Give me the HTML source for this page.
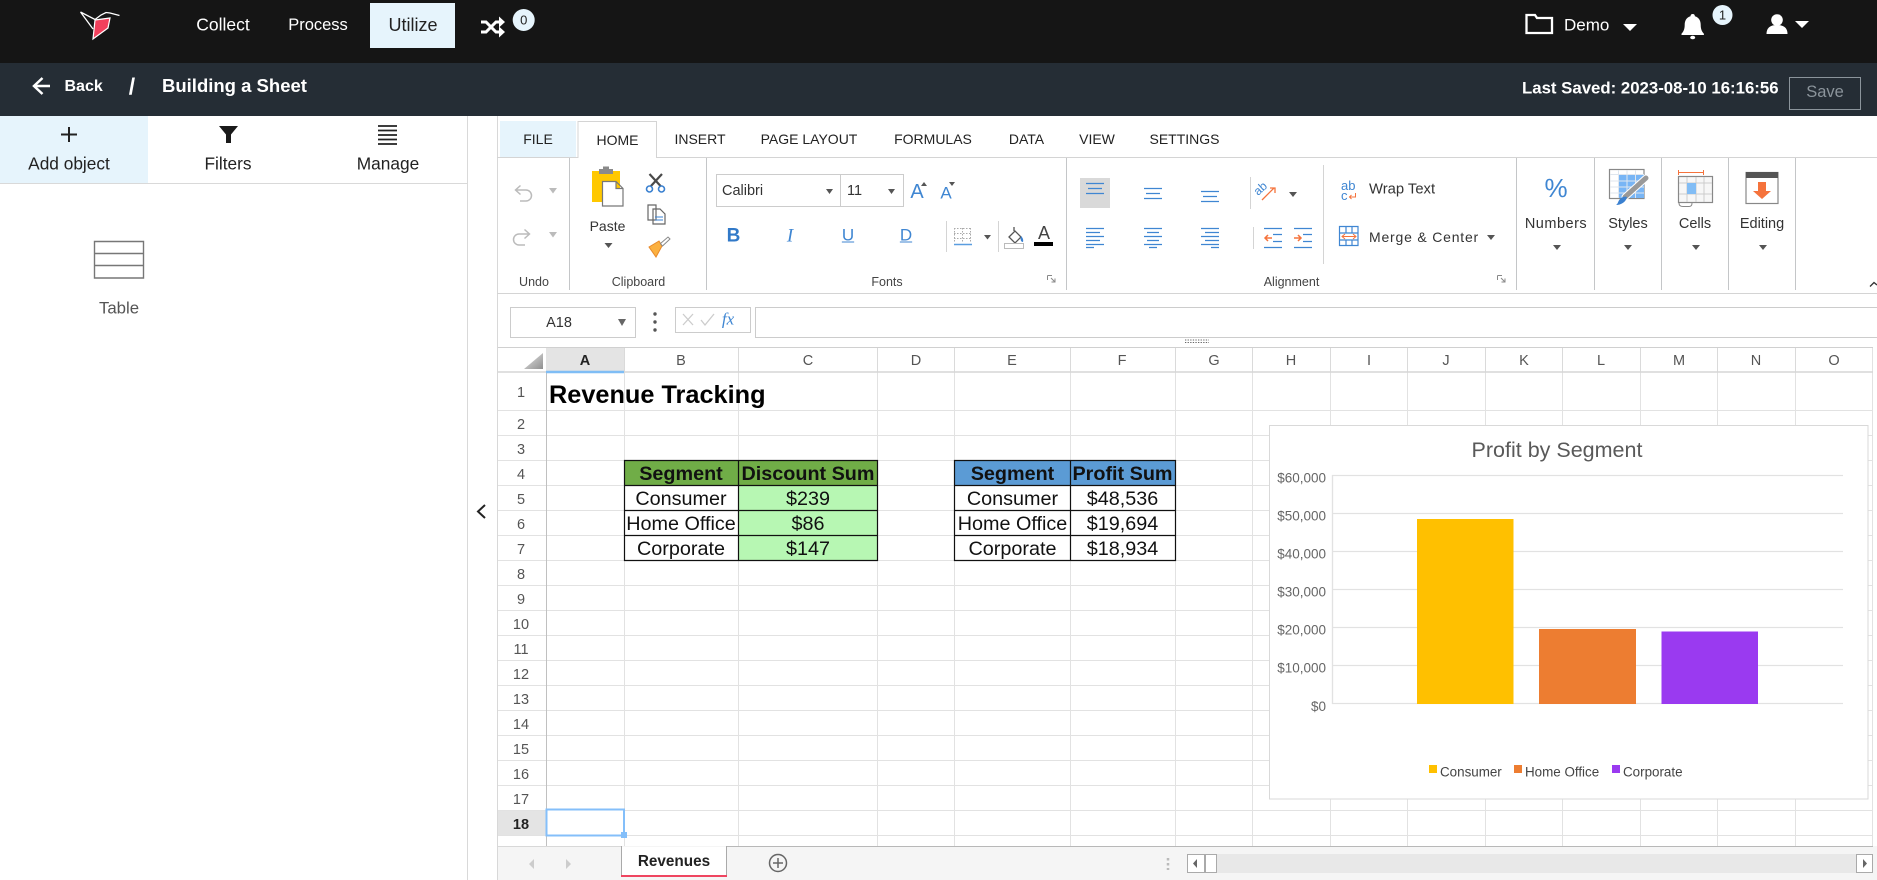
<!DOCTYPE html>
<html><head><meta charset="utf-8"><title>Building a Sheet</title>
<style>
html,body{margin:0;padding:0;background:#fff;width:1877px;height:880px;overflow:hidden}
body{position:relative;font-family:"Liberation Sans",sans-serif;color:#333}
.b{position:absolute}
.c,.l{position:absolute;white-space:nowrap;line-height:1}
.c{transform:translate(-50%,-50%)}
.l{transform:translateY(-50%)}
.w{color:#fff}
.tab{font-size:14px;color:#222}
.g{font-size:12.5px;color:#444}
svg{position:absolute;left:0;top:0}
svg text{font-family:"Liberation Sans",sans-serif}
</style></head><body>
<div class="b" style="left:0;top:0;width:1877px;height:63px;background:#151515"></div>
<div class="b" style="left:0;top:63px;width:1877px;height:53px;background:#252d35"></div>
<div class="b" style="left:370px;top:3px;width:85px;height:45px;background:#e6f4fc"></div>
<div class="b" style="left:0;top:116px;width:148px;height:67px;background:#e6f4fc"></div>
<div class="b" style="left:0;top:183px;width:467px;height:1px;background:#d9d9d9"></div>
<div class="b" style="left:467px;top:116px;width:1px;height:764px;background:#d9d9d9"></div>
<div class="b" style="left:497px;top:116px;width:1px;height:764px;background:#d8d8d8"></div>
<div class="b" style="left:500px;top:121px;width:76px;height:36px;background:#e6f4fc"></div>
<div class="b" style="left:1789px;top:77px;width:70px;height:31px;border:1px solid #8b949b"></div>
<div class="b" style="left:716px;top:174px;width:186px;height:31px;border:1px solid #ccc"></div>
<div class="b" style="left:840px;top:174px;width:1px;height:32px;background:#ccc"></div>
<div class="b" style="left:510px;top:307px;width:124px;height:29px;border:1px solid #ccc"></div>
<div class="b" style="left:675px;top:307px;width:74px;height:24px;border:1px solid #ccc"></div>
<div class="b" style="left:755px;top:307px;width:1122px;height:29px;border:1px solid #ccc;border-right:0"></div>

<svg width="1877" height="880" viewBox="0 0 1877 880">
<!-- ribbon frame -->
<path d="M497 157.5H578V121.5H656.5V157.5H1877M497 293.5H1877" fill="none" stroke="#d4d4d4" stroke-width="1"/>
<path d="M569.5 158V290M706.5 158V290M1066.5 158V290M1516.5 158V290M1594.5 158V290M1661.5 158V290M1728.5 158V290M1795.5 158V290" stroke="#c4c6c8" stroke-width="1"/>
<path d="M946.5 221V252M998.5 221V252M1250.5 177V209M1253.5 227V249M1323.5 165V264" stroke="#d4d4d4"/>
<!-- sheet grid -->
<rect x="498" y="347" width="1379" height="499" fill="#fff"/>
<rect x="546" y="347" width="78" height="25" fill="#e4e4e4"/>
<rect x="498" y="810" width="48" height="25" fill="#e4e4e4"/>
<path d="M624.5 372V846M738.5 372V846M877.5 372V846M954.5 372V846M1070.5 372V846M1175.5 372V846M1252.5 372V846M1330.5 372V846M1407.5 372V846M1485.5 372V846M1562.5 372V846M1640.5 372V846M1717.5 372V846M1795.5 372V846M1872.5 347V846" stroke="#e2e2e2" fill="none"/>
<path d="M624.5 347V372M738.5 347V372M877.5 347V372M954.5 347V372M1070.5 347V372M1175.5 347V372M1252.5 347V372M1330.5 347V372M1407.5 347V372M1485.5 347V372M1562.5 347V372M1640.5 347V372M1717.5 347V372M1795.5 347V372" stroke="#dadada" fill="none"/>
<path d="M498 410.5H1873M498 435.5H1873M498 460.5H1873M498 485.5H1873M498 510.5H1873M498 535.5H1873M498 560.5H1873M498 585.5H1873M498 610.5H1873M498 635.5H1873M498 660.5H1873M498 685.5H1873M498 710.5H1873M498 735.5H1873M498 760.5H1873M498 785.5H1873M498 810.5H1873M498 835.5H1873" stroke="#e2e2e2" fill="none"/>
<path d="M498 347.5H1873" stroke="#d0d0d0"/>
<path d="M498 372H1873" stroke="#d6d6d6" stroke-width="1.5"/>
<path d="M546.5 372V846" stroke="#c0c0c0"/>
<path d="M546 372H624" stroke="#7fbdf5" stroke-width="2.5"/>
<defs><linearGradient id="tri" x1="0" y1="0" x2="1" y2="1"><stop offset="0" stop-color="#e8e8e8"/><stop offset="1" stop-color="#8f8f8f"/></linearGradient></defs>
<path d="M524 369L543 353V369Z" fill="url(#tri)"/>
<g font-size="14.5" fill="#555" text-anchor="middle">
<text x="585" y="365" font-weight="bold" fill="#222">A</text><text x="681" y="365">B</text><text x="808" y="365">C</text><text x="916" y="365">D</text><text x="1012" y="365">E</text><text x="1122" y="365">F</text><text x="1214" y="365">G</text><text x="1291" y="365">H</text><text x="1369" y="365">I</text><text x="1446" y="365">J</text><text x="1524" y="365">K</text><text x="1601" y="365">L</text><text x="1679" y="365">M</text><text x="1756" y="365">N</text><text x="1834" y="365">O</text>
<text x="521" y="397">1</text><text x="521" y="429">2</text><text x="521" y="454">3</text><text x="521" y="479">4</text><text x="521" y="504">5</text><text x="521" y="529">6</text><text x="521" y="554">7</text><text x="521" y="579">8</text><text x="521" y="604">9</text><text x="521" y="629">10</text><text x="521" y="654">11</text><text x="521" y="679">12</text><text x="521" y="704">13</text><text x="521" y="729">14</text><text x="521" y="754">15</text><text x="521" y="779">16</text><text x="521" y="804">17</text><text x="521" y="829" font-weight="bold" fill="#222">18</text>
</g>
<!-- data -->
<text x="549" y="403" font-size="25.3" font-weight="bold" fill="#000">Revenue Tracking</text>
<rect x="624" y="460" width="114" height="25" fill="#70ad47"/><rect x="738" y="460" width="139.5" height="25" fill="#70ad47"/>
<rect x="738" y="485" width="139.5" height="75" fill="#b7f7b3"/>
<rect x="955" y="460" width="220" height="25" fill="#5b9bd5"/>
<path d="M624.5 460.5H877.5V560.5H624.5ZM738.5 460.5V560.5M624.5 485.5H877.5M624.5 510.5H877.5M624.5 535.5H877.5M954.5 460.5H1175.5V560.5H954.5ZM1070.5 460.5V560.5M954.5 485.5H1175.5M954.5 510.5H1175.5M954.5 535.5H1175.5" fill="none" stroke="#111" stroke-width="1.2"/>
<g font-size="19.8" fill="#111" text-anchor="middle">
<text x="681" y="480" font-weight="bold">Segment</text><text x="808" y="480" font-weight="bold">Discount Sum</text>
<text x="681" y="505">Consumer</text><text x="808" y="505">$239</text>
<text x="681" y="530">Home Office</text><text x="808" y="530">$86</text>
<text x="681" y="555">Corporate</text><text x="808" y="555">$147</text>
<text x="1012.5" y="480" font-weight="bold">Segment</text><text x="1122.5" y="480" font-weight="bold">Profit Sum</text>
<text x="1012.5" y="505">Consumer</text><text x="1122.5" y="505">$48,536</text>
<text x="1012.5" y="530">Home Office</text><text x="1122.5" y="530">$19,694</text>
<text x="1012.5" y="555">Corporate</text><text x="1122.5" y="555">$18,934</text>
</g>
<!-- selection -->
<rect x="546.5" y="809.5" width="77.5" height="26" fill="#fff" stroke="#84bffa" stroke-width="2"/>
<rect x="621" y="832" width="6" height="6" fill="#84bffa"/>
<!-- chart -->
<rect x="1269.5" y="425.5" width="598.5" height="373.5" fill="#fff" stroke="#d9d9d9"/>
<text x="1557" y="457" font-size="21.5" text-anchor="middle" fill="#595959">Profit by Segment</text>
<path d="M1332 475.500H1843M1332 513.500H1843M1332 551.500H1843M1332 589.500H1843M1332 627.500H1843M1332 665.500H1843M1332 703.500H1843M1332.500 475V704" stroke="#e2e2e2" fill="none" stroke-width="1.300"/>
<g font-size="13.500" fill="#666" text-anchor="end">
<text x="1326" y="482.500">$60,000</text><text x="1326" y="520.500">$50,000</text><text x="1326" y="558.500">$40,000</text><text x="1326" y="596.500">$30,000</text><text x="1326" y="634.500">$20,000</text><text x="1326" y="672.500">$10,000</text><text x="1326" y="711">$0</text>
</g>
<rect x="1417" y="519" width="96.500" height="185" fill="#ffc000"/>
<rect x="1539" y="629" width="97" height="75" fill="#ed7d31"/>
<rect x="1661.500" y="631.500" width="96.500" height="72.500" fill="#9a3af0"/>
<rect x="1429" y="765" width="8" height="8" fill="#ffc000"/><rect x="1514" y="765" width="8" height="8" fill="#ed7d31"/><rect x="1612" y="765" width="8" height="8" fill="#9a3af0"/>
<g font-size="13.400" fill="#444"><text x="1440" y="776.500">Consumer</text><text x="1525" y="776.500">Home Office</text><text x="1623" y="776.500">Corporate</text></g>
<!-- sheet tabs -->
<rect x="498" y="846" width="1379" height="34" fill="#f5f5f5"/>
<path d="M498 846.500H621" stroke="#d8d8d8"/><path d="M727 846.500H1873" stroke="#b8b8b8"/>
<path d="M621.500 846V876M726.500 846V876" stroke="#aaa"/>
<rect x="622" y="847" width="104" height="28" fill="#fff"/>
<rect x="621" y="875" width="106" height="2" fill="#ef4560"/>
<text x="674" y="866" font-size="15.300" font-weight="bold" text-anchor="middle" fill="#222">Revenues</text>
<path d="M534 859V869L529 864ZM566 859V869L571 864Z" fill="#ccc"/>
<circle cx="778" cy="863" r="8.500" fill="none" stroke="#666" stroke-width="1.500"/><path d="M773 863H783M778 858V868" stroke="#666" stroke-width="1.500"/>
<path d="M1168 858V870" stroke="#bbb" stroke-width="2.500" stroke-dasharray="2.500 2.500"/>
<rect x="1187" y="854" width="685" height="19" fill="#e8e8e8"/>
<rect x="1187.500" y="854.500" width="17" height="18" fill="#fff" stroke="#aaa"/><rect x="1205.500" y="854.500" width="11" height="18" fill="#fff" stroke="#aaa"/><rect x="1856.500" y="854.500" width="16" height="18" fill="#fff" stroke="#aaa"/>
<path d="M1197 859V868L1193 863.500ZM1863 859V868L1867 863.500Z" fill="#666"/>
<!-- top bar icons -->
<path d="M80.500 12L95 19.500L101 15L106 12.500L110 13L119.500 15.500M80.500 12L93 29" fill="none" stroke="#fff" stroke-width="1.300"/>
<path d="M95 20L110 18L108 28L93 39Z" fill="#f2405c" stroke="#fff" stroke-width="1.200"/>
<path d="M481 22H486L496 32H500M481 32H486L496 22H500" fill="none" stroke="#fff" stroke-width="3"/>
<path d="M499 16.500L505 22L499 27.500ZM499 26.500L505 32L499 37.500Z" fill="#fff"/>
<path d="M1526.500 15H1535L1537 18H1552V33H1526.500Z" fill="none" stroke="#fff" stroke-width="2.300"/>
<path d="M1623 24H1637L1630 31Z" fill="#fff"/>
<path d="M1692.700 14c-1.500 0-2.200 1-2.200 2.200c-4 1-5.800 4.500-5.800 8.500c0 5-1.500 7-3.200 9v1.300h22.400v-1.300c-1.700-2-3.200-4-3.200-9c0-4-1.800-7.500-5.800-8.500c0-1.200-.7-2.200-2.200-2.200z" fill="#fff"/>
<ellipse cx="1692.700" cy="37.500" rx="2.500" ry="1.800" fill="#fff"/>
<circle cx="1777" cy="20" r="5.800" fill="#fff"/><path d="M1766.500 34c0-7 5-9 10.500-9s10.500 2 10.500 9z" fill="#fff"/>
<path d="M1795 21H1809L1802 28Z" fill="#fff"/>
<circle cx="523.700" cy="20" r="11" fill="#e6f4fc"/>
<circle cx="1722.500" cy="15" r="10" fill="#e6f4fc"/>
<path d="M50 86H35M42.500 78L34 86L42.500 94" fill="none" stroke="#fff" stroke-width="2.500"/>
<!-- left panel icons -->
<path d="M61 134.500H77M69 127V142" stroke="#222" stroke-width="2"/>
<path d="M219 126H238L231 134.500V143H226V134.500Z" fill="#1a1a1a"/>
<path d="M378 126H397M378 130.500H397M378 135H397M378 139.500H397M378 144H397" stroke="#222" stroke-width="1.800"/>
<path d="M94.500 241.500H143.500V278H94.500ZM94.500 253.500H143.500M94.500 265.500H143.500" fill="none" stroke="#777" stroke-width="1.400"/>
<path d="M485 505L478 511.500L485 518" fill="none" stroke="#222" stroke-width="2"/>
<!-- undo / redo -->
<path d="M516 190H526a5.500 5.500 0 0 1 0 11H520M520.500 185.500L515.500 190L520.500 194.500" fill="none" stroke="#bbb" stroke-width="1.500"/>
<path d="M529 234H519a5.500 5.500 0 0 0 0 11H525M524.500 229.500L529.500 234L524.500 238.500" fill="none" stroke="#bbb" stroke-width="1.500"/>
<path d="M549 188H557L553 193.500ZM549 232H557L553 237.500Z" fill="#bbb"/>
<!-- clipboard -->
<rect x="592" y="171" width="28" height="31" fill="#ffc800"/>
<rect x="599" y="169" width="14" height="5" fill="#8a8a8a"/><rect x="603" y="166.500" width="6" height="4" fill="#8a8a8a"/>
<path d="M602.500 181.500H616L623 188.500V206H602.500ZM616 181.500V188.500H623" fill="#fff" stroke="#777" stroke-width="1.200"/>
<path d="M604.500 243H612.500L608.500 248Z" fill="#555"/>
<path d="M650.500 186.500L662 174M661 186.500L649.500 174" stroke="#4a4a4a" stroke-width="2.200" fill="none"/>
<circle cx="649.500" cy="189" r="3" fill="none" stroke="#3a80d0" stroke-width="1.600"/><circle cx="661.500" cy="189" r="3" fill="none" stroke="#3a80d0" stroke-width="1.600"/>
<path d="M648 205H656V220H648ZM653 209H660L665 214V224H653Z" fill="#fff" stroke="#666" stroke-width="1.200"/>
<path d="M655 217H663M655 220H663" stroke="#3a80d0"/>
<path d="M649 247L659 241L662 246L656 257Z" fill="#fbb040" stroke="#e8892a"/>
<path d="M660.500 243.500L668 237L670 239L662.500 246Z" fill="#fff" stroke="#888"/>
<!-- fonts -->
<path d="M826 189H833L829.500 194ZM888 189H895L891.500 194Z" fill="#555"/>
<path d="M921 186L924 182L927 186Z" fill="#555"/><path d="M949 182H955L952 186Z" fill="#555"/>
<path d="M954 228.500H971M954 233.500H971M954 238.500H971M954.500 228V243M962.500 228V243M970.500 228V243" stroke="#aaa" stroke-dasharray="1.500 1.500" fill="none"/>
<path d="M954 244.500H972" stroke="#5a9ee0" stroke-width="1.500"/>
<path d="M984 235H991L987.500 239.500Z" fill="#555"/>
<path d="M1009 237L1015 231L1021 237L1015 243Z" fill="#fff" stroke="#555" stroke-width="1.300"/><path d="M1014 227V231" stroke="#555" stroke-width="1.300"/>
<path d="M1021 236c2 2 2.500 4 2 6c-2 0-3-2-2-6" fill="#3a80d0"/>
<rect x="1004.500" y="243.500" width="19" height="5" fill="#fff" stroke="#bbb"/>
<rect x="1034" y="242" width="19" height="4" fill="#000"/>
<!-- launcher -->
<path d="M1047.500 275.500H1052M1047.500 275.500V280M1051 278L1055 282M1055 278.500V282H1051.500" fill="none" stroke="#888"/>
<path d="M1497.500 275.500H1502M1497.500 275.500V280M1501 278L1505 282M1505 278.500V282H1501.500" fill="none" stroke="#888"/>
<!-- alignment -->
<rect x="1080" y="178" width="30" height="30" fill="#d9d9d9"/>
<g stroke="#3f86d2" stroke-width="1.300" fill="none">
<path d="M1086 183.500H1104M1088 188.500H1102M1086 193.500H1104"/>
<path d="M1144 188.500H1162M1146 193.500H1160M1144 198.500H1162"/>
<path d="M1201 191.500H1219M1203 196.500H1217M1201 201.500H1219"/>
<path d="M1086 228.500H1104M1086 232.500H1100M1086 236.500H1104M1086 240.500H1100M1086 244.500H1104M1086 247.500H1094"/>
<path d="M1144 228.500H1162M1147 232.500H1159M1144 236.500H1162M1147 240.500H1159M1144 244.500H1162M1149 247.500H1157"/>
<path d="M1201 228.500H1219M1205 232.500H1219M1201 236.500H1219M1205 240.500H1219M1201 244.500H1219M1211 247.500H1219"/>
<path d="M1264 228.500H1282M1273 234.500H1282M1273 241.500H1282M1264 247.500H1282"/>
<path d="M1294 228.500H1312M1303 234.500H1312M1303 241.500H1312M1294 247.500H1312"/>
</g>
<path d="M1272 238H1265M1268 235L1265 238L1268 241M1294 238H1301M1298 235L1301 238L1298 241" stroke="#f5733c" stroke-width="1.500" fill="none"/>
<path d="M1262 200L1274 188M1270 188H1275V193" stroke="#f5733c" stroke-width="1.300" fill="none"/>
<text x="1258" y="196" font-size="12" fill="#3f86d2" transform="rotate(-42 1258 196)">ab</text>
<path d="M1289 192H1297L1293 197Z" fill="#555"/>
<text x="1341" y="190" font-size="13" fill="#3f86d2">ab</text><text x="1341" y="200" font-size="13" fill="#3f86d2">c</text>
<path d="M1355.500 193V197H1349.500M1351.500 195L1349.500 197L1351.500 199" stroke="#f5733c" fill="none"/>
<path d="M1339.500 226.500H1358V245.500H1339.500ZM1339.500 233H1358M1339.500 240H1358M1346 226.500V233M1352 226.500V233M1346 240V245.500M1352 240V245.500" fill="#fff" stroke="#3f86d2" stroke-width="1.200"/>
<path d="M1342 236.500H1356M1345 234L1342 236.500L1345 239M1353 234L1356 236.500L1353 239" stroke="#f5733c" fill="none"/>
<path d="M1487 235H1495L1491 240Z" fill="#555"/>
<!-- right groups -->
<path d="M1553 245H1561L1557 250ZM1624 245H1632L1628 250ZM1692 245H1700L1696 250ZM1759 245H1767L1763 250Z" fill="#555"/>
<rect x="1609.500" y="169.500" width="34.500" height="29" fill="#fff" stroke="#888" stroke-width="1.200"/>
<rect x="1618" y="174" width="26" height="24" fill="#78b5f5"/>
<path d="M1610 174.500H1644M1610 181H1644M1610 187H1644M1610 193H1644M1618.500 170V198M1627 170V198M1635.500 170V198" stroke="#dfe6ee" fill="none"/>
<path d="M1646 178L1625 197" stroke="#fff" stroke-width="7" stroke-linecap="round"/>
<path d="M1646 178L1625 197" stroke="#999" stroke-width="5" stroke-linecap="round"/>
<path d="M1627 197c-1 5-6 8-11 8c2-1 2-4 4-6c2-2 5-3 7-2z" fill="#3a80d0"/>
<path d="M1678 172.500H1704M1678.500 170V175M1703.500 170V175" stroke="#f5733c" fill="none"/>
<rect x="1678.500" y="176.500" width="34" height="26" fill="#f7f7f7" stroke="#888" stroke-width="1.200"/>
<path d="M1687 177V202M1696 177V202M1704 177V202M1679 183H1712M1679 194H1712" stroke="#ccc" fill="none"/>
<rect x="1687" y="183" width="9" height="11" fill="#82bdf5"/>
<path d="M1679 203c0 3 2 3.500 4 3.500h6c2 0 3-1 3-3.500" stroke="#888" fill="none"/>
<rect x="1746" y="172.500" width="32" height="31" fill="#fff" stroke="#888" stroke-width="1.200"/>
<rect x="1746" y="172" width="32" height="6" fill="#555"/>
<path d="M1758 182H1766V191H1771L1762 199L1753 191H1758Z" fill="#f5733c"/>
<path d="M1870 286.500L1874 282.500L1877 285" fill="none" stroke="#333" stroke-width="1.300"/>
<!-- formula bar -->
<path d="M618 319H626L622 326Z" fill="#666"/>
<circle cx="655" cy="314" r="1.700" fill="#555"/><circle cx="655" cy="322" r="1.700" fill="#555"/><circle cx="655" cy="330" r="1.700" fill="#555"/>
<path d="M683 314L693 325M693 314L683 325" stroke="#ccc" stroke-width="1.300"/>
<path d="M701 320L705 325L714 314" stroke="#ccc" stroke-width="1.300" fill="none"/>
<path d="M1185 340H1209M1185 342.500H1209" stroke="#666" stroke-dasharray="1.300 1.300"/>
</svg>

<span class="c w" style="left:223px;top:25px;font-size:17.500px">Collect</span>
<span class="c w" style="left:318px;top:25px;font-size:16.500px">Process</span>
<span class="c" style="left:413px;top:25px;font-size:18px;color:#222">Utilize</span>
<span class="c" style="left:523.700px;top:20px;font-size:13px;color:#222">0</span>
<span class="l w" style="left:1564px;top:25px;font-size:17px">Demo</span>
<span class="c" style="left:1722.500px;top:15px;font-size:13px;color:#222">1</span>

<span class="l w" style="left:64.500px;top:87px;font-size:16px;font-weight:bold">Back</span>
<span class="c w" style="left:132px;top:87px;font-size:23px;font-weight:bold">/</span>
<span class="l w" style="left:162px;top:86px;font-size:18.500px;font-weight:bold">Building a Sheet</span>
<span class="l w" style="left:1522px;top:89px;font-size:16.800px;font-weight:bold">Last Saved: 2023-08-10 16:16:56</span>
<span class="c" style="left:1825px;top:92px;font-size:16.500px;color:#8b949b">Save</span>

<span class="c" style="left:69px;top:164px;font-size:17.300px;color:#222">Add object</span>
<span class="c" style="left:228px;top:164px;font-size:17.300px;color:#222">Filters</span>
<span class="c" style="left:388px;top:164px;font-size:17.300px;color:#222">Manage</span>
<span class="c" style="left:119px;top:309px;font-size:16.800px;color:#555">Table</span>

<span class="c tab" style="left:538px;top:139px">FILE</span>
<span class="c tab" style="left:617.500px;top:140px">HOME</span>
<span class="c tab" style="left:700px;top:139px">INSERT</span>
<span class="c tab" style="left:809px;top:139px">PAGE LAYOUT</span>
<span class="c tab" style="left:933px;top:139px">FORMULAS</span>
<span class="c tab" style="left:1026.500px;top:139px">DATA</span>
<span class="c tab" style="left:1097px;top:139px">VIEW</span>
<span class="c tab" style="left:1184.500px;top:139px">SETTINGS</span>

<span class="c g" style="left:534px;top:282px">Undo</span>
<span class="c g" style="left:638.500px;top:282px">Clipboard</span>
<span class="c g" style="left:887px;top:282px">Fonts</span>
<span class="c g" style="left:1291.500px;top:282px">Alignment</span>
<span class="c" style="left:607.500px;top:226px;font-size:14px">Paste</span>
<span class="l" style="left:722px;top:191px;font-size:14.500px">Calibri</span>
<span class="l" style="left:847px;top:191px;font-size:14.500px">11</span>
<span class="c" style="left:917px;top:192px;font-size:20px;color:#3f86d2">A</span>
<span class="c" style="left:946px;top:193px;font-size:17px;color:#3f86d2">A</span>
<span class="c" style="left:733.500px;top:236px;font-size:19px;font-weight:bold;color:#3179c8">B</span>
<span class="c" style="left:790px;top:236px;font-size:19px;font-style:italic;font-family:'Liberation Serif',serif;color:#3f86d2">I</span>
<span class="c" style="left:848px;top:235px;font-size:17px;color:#3f86d2;text-decoration:underline">U</span>
<span class="c" style="left:906px;top:235px;font-size:17px;color:#3f86d2;text-decoration:underline">D</span>
<span class="c" style="left:1044px;top:233px;font-size:18px;color:#444">A</span>
<span class="l" style="left:1369px;top:190px;font-size:14.800px">Wrap Text</span>
<span class="l" style="left:1369px;top:237px;font-size:14px;letter-spacing:.8px">Merge &amp; Center</span>
<span class="c" style="left:1556px;top:188px;font-size:26px;color:#3f86d2">%</span>
<span class="c" style="left:1556px;top:224px;font-size:14.500px;letter-spacing:.5px">Numbers</span>
<span class="c" style="left:1628px;top:224px;font-size:14.500px">Styles</span>
<span class="c" style="left:1695px;top:224px;font-size:14.500px">Cells</span>
<span class="c" style="left:1762px;top:224px;font-size:14.500px">Editing</span>
<span class="c" style="left:559px;top:323px;font-size:14.500px">A18</span>
<span class="c" style="left:728px;top:319px;font-size:17px;font-style:italic;font-family:'Liberation Serif',serif;color:#3f86d2">fx</span>
</body></html>
